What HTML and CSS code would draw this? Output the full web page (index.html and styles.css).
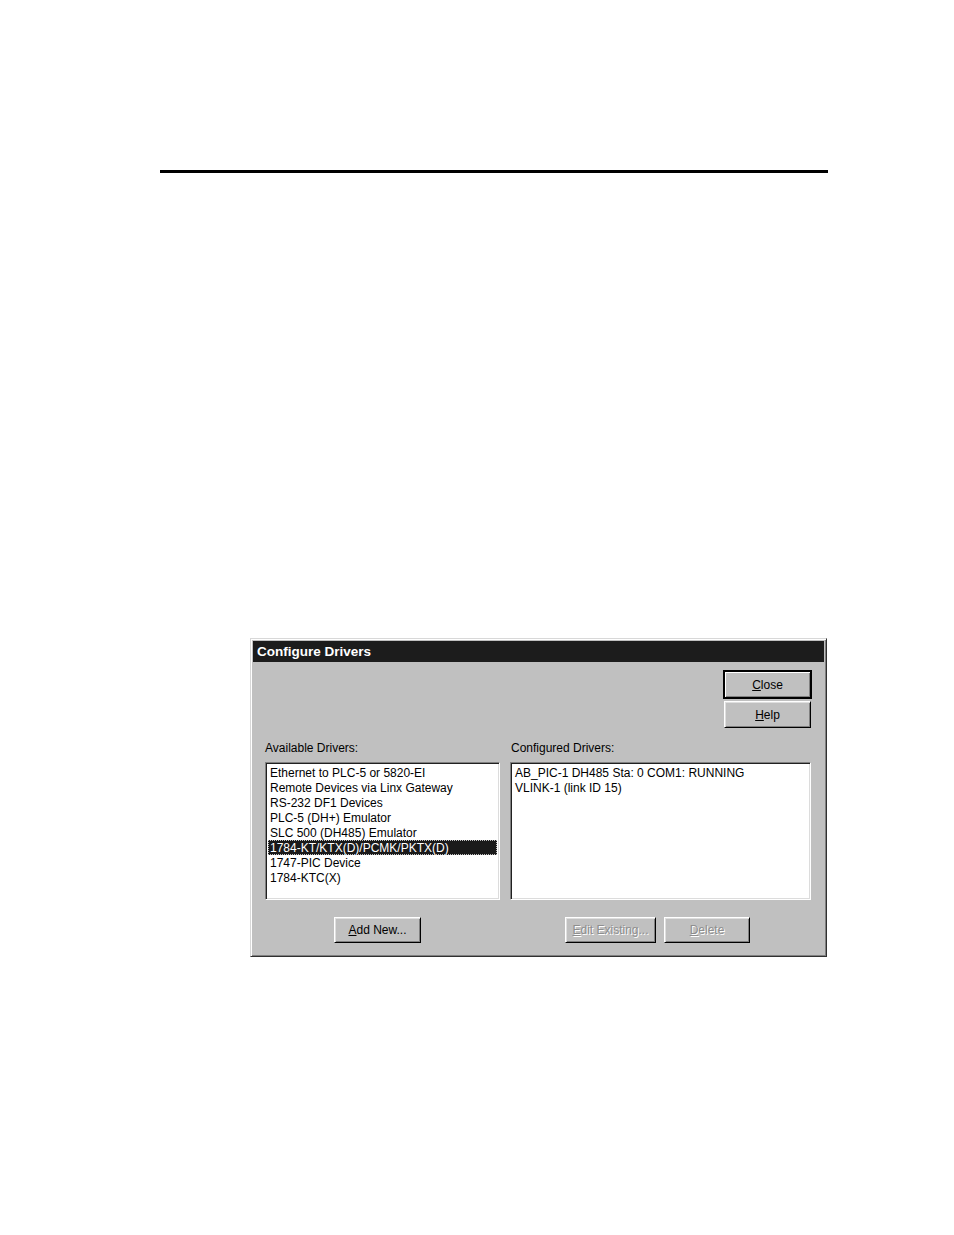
FILE: index.html
```html
<!DOCTYPE html>
<html>
<head>
<meta charset="utf-8">
<link rel="stylesheet" href="styles.css">
</head>
<body>
<div class="page">
  <div class="rule"></div>
  <div class="dialog">
    <div class="titlebar">Configure Drivers</div>
    <div class="dbody">
      <div class="toprow">
        <div class="btncol">
          <div class="btn default"><span><u>C</u>lose</span></div>
          <div class="btn"><span><u>H</u>elp</span></div>
        </div>
      </div>
      <div class="panes">
        <div class="pane left">
          <div class="label">Available Drivers:</div>
          <div class="list">
            <div class="item">Ethernet to PLC-5 or 5820-EI</div>
            <div class="item">Remote Devices via Linx Gateway</div>
            <div class="item">RS-232 DF1 Devices</div>
            <div class="item">PLC-5 (DH+) Emulator</div>
            <div class="item">SLC 500 (DH485) Emulator</div>
            <div class="item selected">1784-KT/KTX(D)/PCMK/PKTX(D)</div>
            <div class="item">1747-PIC Device</div>
            <div class="item">1784-KTC(X)</div>
          </div>
          <div class="btnrow left-btns">
            <div class="btn add"><span><u>A</u>dd New...</span></div>
          </div>
        </div>
        <div class="pane right">
          <div class="label">Configured Drivers:</div>
          <div class="list">
            <div class="item">AB_PIC-1 DH485 Sta: 0 COM1: RUNNING</div>
            <div class="item">VLINK-1 (link ID 15)</div>
          </div>
          <div class="btnrow right-btns">
            <div class="btn disabled edit"><span><u>E</u>dit Existing...</span></div>
            <div class="btn disabled del"><span><u>D</u>elete</span></div>
          </div>
        </div>
      </div>
    </div>
  </div>
</div>
</body>
</html>
```

FILE: styles.css
```css
html, body {
  margin: 0;
  padding: 0;
  background: #ffffff;
}
body {
  width: 954px;
  height: 1235px;
  font-family: "Liberation Sans", Arial, sans-serif;
  font-size: 12px;
  color: #000;
}
.page {
  padding-top: 170px;
}
.rule {
  margin-left: 160px;
  width: 668px;
  height: 3px;
  background: #000;
}
.dialog {
  margin-top: 465px;
  margin-left: 250px;
  width: 577px;
  height: 319px;
  box-sizing: border-box;
  background: #c0c0c0;
  border-top: 1px solid #d8d8d8;
  border-left: 1px solid #d8d8d8;
  border-right: 1px solid #303030;
  border-bottom: 1px solid #303030;
  box-shadow: inset 1px 1px 0 #ffffff, inset -1px -1px 0 #808080;
  padding: 2px;
  display: flex;
  flex-direction: column;
}
.titlebar {
  height: 21px;
  line-height: 21px;
  background: #1c1c1c;
  color: #ffffff;
  font-weight: bold;
  font-size: 13.5px;
  padding-left: 4px;
  white-space: nowrap;
}
.dbody {
  padding: 9px 12px 0 12px;
  display: flex;
  flex-direction: column;
}
.toprow {
  display: flex;
  justify-content: flex-end;
  padding-right: 1px;
}
.btncol {
  display: flex;
  flex-direction: column;
  gap: 3px;
}
.btn {
  width: 87px;
  height: 27px;
  box-sizing: border-box;
  background: #c0c0c0;
  border-top: 1px solid #ffffff;
  border-left: 1px solid #ffffff;
  border-right: 1px solid #000000;
  border-bottom: 1px solid #000000;
  box-shadow: inset 1px 1px 0 #dfdfdf, inset -1px -1px 0 #808080;
  display: flex;
  align-items: center;
  justify-content: center;
  white-space: nowrap;
}
.btn.default {
  outline: 1px solid #000;
  outline-offset: 0;
  border-top-color: #000;
  border-left-color: #000;
  box-shadow: inset 1px 1px 0 #ffffff, inset -1px -1px 0 #808080;
}
.btn span {
  line-height: 14px;
}
.btn.disabled span {
  color: #8e8e8e;
  text-shadow: 1px 1px 0 #ffffff;
}
.panes {
  display: flex;
  gap: 10px;
}
.pane {
  display: flex;
  flex-direction: column;
}
.pane.left {
  width: 235px;
}
.pane.right {
  width: 301px;
}
.label {
  margin-top: 13px;
  height: 14px;
  line-height: 14px;
  margin-bottom: 7px;
  white-space: nowrap;
}
.pane.right .label {
  padding-left: 1px;
}
.list {
  height: 138px;
  box-sizing: border-box;
  background: #ffffff;
  border-top: 1px solid #808080;
  border-left: 1px solid #808080;
  border-right: 1px solid #ffffff;
  border-bottom: 1px solid #ffffff;
  box-shadow: inset 1px 1px 0 #202020, inset -1px -1px 0 #dcdcdc;
  padding: 2px 2px 0 2px;
  overflow: hidden;
}
.item {
  height: 15px;
  line-height: 16px;
  padding-left: 2px;
  white-space: nowrap;
  box-sizing: border-box;
}
.item.selected {
  background: #1a1a1a;
  color: #ffffff;
  outline: 1px dotted #c0c0c0;
  outline-offset: -1px;
}
.btnrow {
  display: flex;
  margin-top: 17px;
  gap: 8px;
}
.btnrow .btn {
  height: 26px;
}
.left-btns {
  padding-left: 69px;
}
.right-btns {
  padding-left: 55px;
}
.btn.edit {
  width: 91px;
}
.btn.del {
  width: 86px;
}
```
